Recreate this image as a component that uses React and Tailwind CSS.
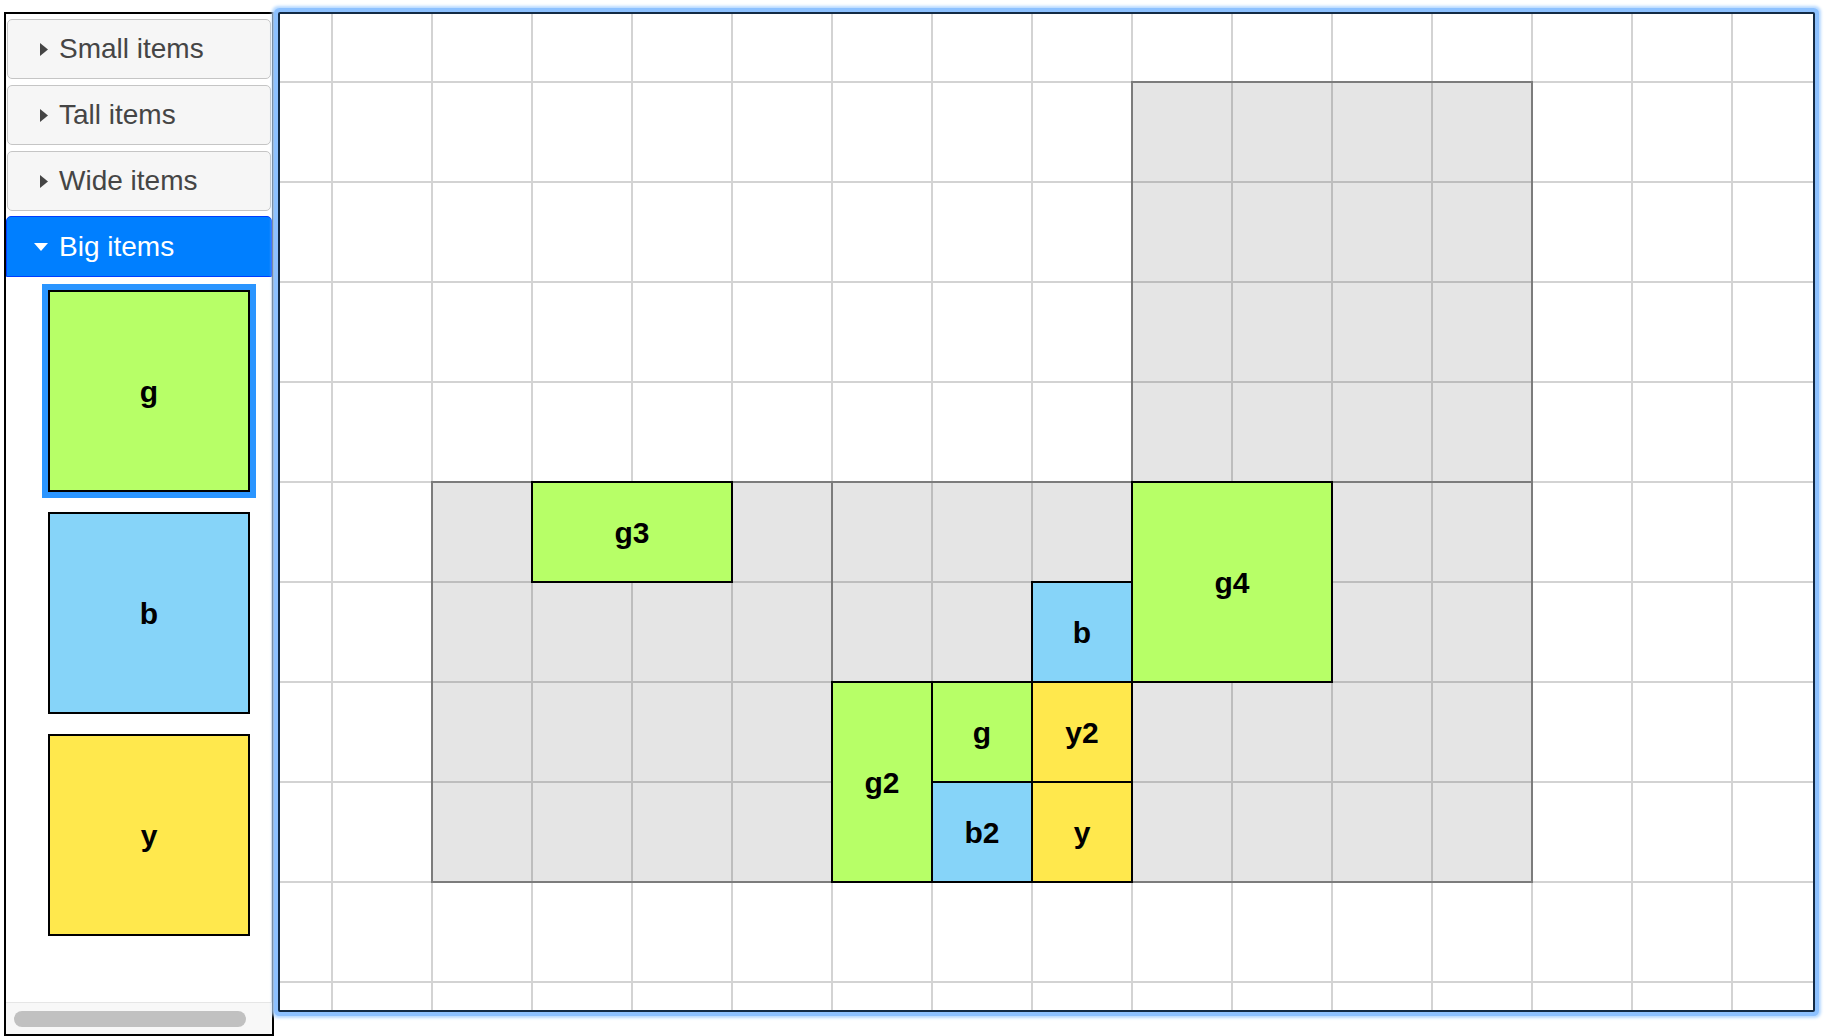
import React from 'react';

// grid geometry, in px inside the canvas border
const CELL = 100;
const OX = 51;
const OY = 67;
const CANVAS_W = 1533;
const CANVAS_H = 996;

const sections = [
  { name: 'Small items', open: false },
  { name: 'Tall items', open: false },
  { name: 'Wide items', open: false },
  { name: 'Big items', open: true },
];

const palette = {
  g: 'bg-[#b7ff67]',
  b: 'bg-[#86d4f9]',
  y: 'bg-[#ffe84d]',
};

const paletteItems = [
  { label: 'g', kind: 'g', selected: true },
  { label: 'b', kind: 'b' },
  { label: 'y', kind: 'y' },
];

const zones = [
  { id: 'top-right', col: 8, row: 0, w: 4, h: 4 },
  { id: 'left', col: 1, row: 4, w: 4, h: 4 },
  { id: 'middle', col: 5, row: 4, w: 3, h: 4 },
  { id: 'right', col: 8, row: 4, w: 4, h: 4 },
];

const placed = [
  { label: 'g3', kind: 'g', col: 2, row: 4, w: 2, h: 1 },
  { label: 'g4', kind: 'g', col: 8, row: 4, w: 2, h: 2 },
  { label: 'b', kind: 'b', col: 7, row: 5, w: 1, h: 1 },
  { label: 'g2', kind: 'g', col: 5, row: 6, w: 1, h: 2 },
  { label: 'g', kind: 'g', col: 6, row: 6, w: 1, h: 1 },
  { label: 'b2', kind: 'b', col: 6, row: 7, w: 1, h: 1 },
  { label: 'y2', kind: 'y', col: 7, row: 6, w: 1, h: 1 },
  { label: 'y', kind: 'y', col: 7, row: 7, w: 1, h: 1 },
];

const cellBox = ({ col, row, w, h }) => ({
  left: OX + col * CELL,
  top: OY + row * CELL,
  width: w * CELL + 2,
  height: h * CELL + 2,
});

const Arrow = ({ open }) =>
  open ? (
    <svg width="14" height="8" viewBox="0 0 14 8" className="shrink-0">
      <polygon points="0,0 14,0 7,8" fill="#ffffff" />
    </svg>
  ) : (
    <svg width="8" height="13" viewBox="0 0 8 13" className="shrink-0">
      <polygon points="0,0 8,6.5 0,13" fill="#454545" />
    </svg>
  );

const GridLines = () => (
  <svg className="absolute inset-0" width={CANVAS_W} height={CANVAS_H}>
    {Array.from({ length: 15 }, (_, k) => (
      <rect key={'v' + k} x={OX + k * CELL} y={0} width={2} height={CANVAS_H} fill="#d3d3d3" />
    ))}
    {Array.from({ length: 10 }, (_, j) => (
      <rect key={'h' + j} x={0} y={OY + j * CELL} width={CANVAS_W} height={2} fill="#d3d3d3" />
    ))}
  </svg>
);

export default function App() {
  return (
    <div className="min-h-screen bg-white flex items-start pl-[4px] pt-[12px] font-['Liberation_Sans',Arial,sans-serif]">
      {/* Palette / accordion */}
      <div className="w-[270px] h-[1024px] border-2 border-black bg-white flex flex-col shrink-0">
        <div className="flex flex-col px-[1px] pt-[5px]">
          {sections.map((s, i) =>
            s.open ? (
              <div
                key={s.name}
                className="mt-[5px] h-[61px] -mx-[1px] flex items-center border border-[#003eff] bg-[#007fff] rounded-t-[5px] text-white text-[28px]"
              >
                <div className="w-[27px]" />
                <Arrow open />
                <span className="ml-[11px]">{s.name}</span>
              </div>
            ) : (
              <div
                key={s.name}
                className={`${i === 0 ? '' : 'mt-[6px]'} h-[60px] flex items-center border border-[#c5c5c5] bg-[#f6f6f6] rounded-[5px] text-[#454545] text-[28px]`}
              >
                <div className="w-[32px]" />
                <Arrow />
                <span className="ml-[11px]">{s.name}</span>
              </div>
            )
          )}
        </div>

        <div className="flex-1 border-r border-[#dddddd] flex flex-col gap-[20px] pl-[42px] pt-[13px] overflow-hidden">
          {paletteItems.map((it) => (
            <div
              key={it.label}
              className={`w-[202px] h-[202px] shrink-0 border-2 border-black ${palette[it.kind]} flex items-center justify-center text-[30px] font-bold text-black ${
                it.selected ? 'shadow-[0_0_0_6px_#2a95ff]' : ''
              }`}
            >
              {it.label}
            </div>
          ))}
        </div>

        <div className="h-[32px] shrink-0 border-t border-[#e6e6e6] bg-[#f8f8f8] flex items-center px-[8px]">
          <div className="w-[232px] h-[16px] rounded-full bg-[#c1c1c1]" />
        </div>
      </div>

      {/* Canvas */}
      <div className="ml-[4px] w-[1537px] h-[1000px] shrink-0 relative overflow-hidden border-2 border-[#132b45] bg-white shadow-[0_0_0_4px_#8dc1ff,0_0_3px_6px_#b7d9ff] rounded-[2px]">
        <GridLines />
        {zones.map((z) => (
          <div
            key={z.id}
            className="absolute border-2 border-[#7c7c7c] bg-black/10"
            style={cellBox(z)}
          />
        ))}
        {placed.map((it) => (
          <div
            key={it.label}
            className={`absolute border-2 border-black ${palette[it.kind]} flex items-center justify-center text-[30px] font-bold text-black`}
            style={cellBox(it)}
          >
            {it.label}
          </div>
        ))}
      </div>
    </div>
  );
}
